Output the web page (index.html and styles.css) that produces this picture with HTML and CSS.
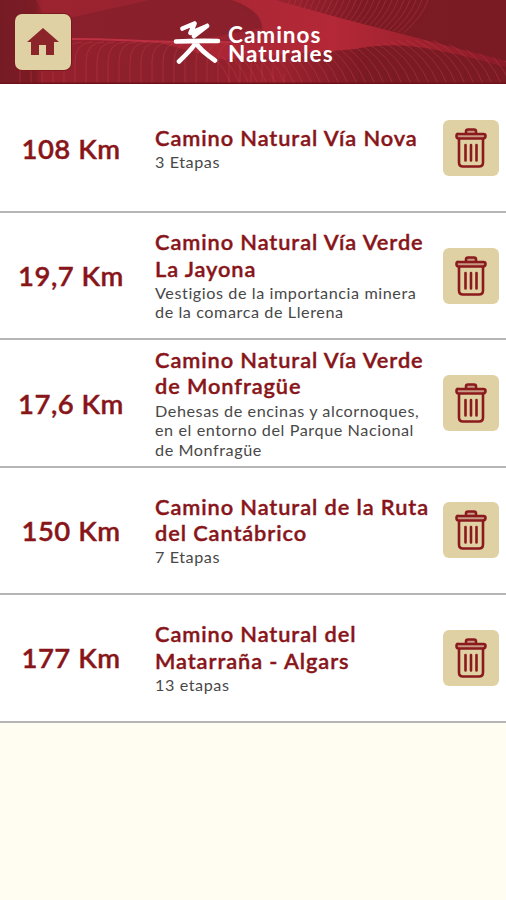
FILE: index.html
```
<!DOCTYPE html>
<html lang="es">
<head>
<meta charset="utf-8">
<title>Caminos Naturales</title>
<link rel="stylesheet" href="styles.css">
</head>
<body>
<svg class="defs" aria-hidden="true">
  <symbol id="trash" viewBox="0 0 34 42">
    <path class="lid" d="M12 6.500V4.500Q12 2.500 14 2.500H20Q22 2.500 22 4.500V6.500M4.500 7H29.500Q31.500 7 31.500 9T29.500 11.500H4.500Q2.500 11.500 2.500 9T4.500 7Z"/>
    <path d="M5 12V35.500Q5 39.500 9 39.500H25Q29 39.500 29 35.500V12M11.500 18V33.500M17 18V33.500M22.500 18V33.500"/>
  </symbol>
</svg>
<header class="header">
  <svg class="art" viewBox="0 0 506 84" preserveAspectRatio="none" aria-hidden="true">
    <defs>
      <linearGradient id="base"><stop offset="0" stop-color="#761b24"/><stop offset=".07" stop-color="#7c1c25"/><stop offset=".085" stop-color="#96222e"/><stop offset=".35" stop-color="#8a212c"/><stop offset=".55" stop-color="#9c2431"/><stop offset=".72" stop-color="#7b1b24"/><stop offset="1" stop-color="#7a1b24"/></linearGradient>
      <linearGradient id="glow"><stop offset="0" stop-color="#a52634"/><stop offset=".5" stop-color="#b42837"/><stop offset="1" stop-color="#8b1c28"/></linearGradient>
      <clipPath id="low-left"><path d="M0 38H72C120 38 170 44 240 44L300 84H0Z"/></clipPath>
      <clipPath id="top-right"><path d="M275 0H440L404 34L340 18Z"/></clipPath>
      <clipPath id="low-right"><path d="M215 84V55C270 48 320 50 340 50C385 46 405 34 420 36L506 61V84Z"/></clipPath>
    </defs>
    <path fill="url(#base)" d="M0 0H506V84H0Z"/>
    <path fill="#a32533" opacity=".55" d="M36 0H235L268 38L170 43L72 38L45 16Z"/>
    <path fill="#7e1e28" opacity=".6" d="M150 0H232Q262 12 262 28L180 43L72 38L60 20Z"/>
    <path fill="url(#glow)" d="M232 0H275L340 18L506 61V67C435 48 400 40 355 49C300 54 260 55 225 60L160 43H240Q266 40 262 25Q259 9 232 0Z"/>
    <path fill="none" stroke="#bd3042" stroke-width="2" d="M72 39C110 38 160 44 240 42"/>
    <g clip-path="url(#low-left)" class="lines" id="lines-left"></g>
    <g clip-path="url(#top-right)" class="lines" id="lines-top"></g>
    <g clip-path="url(#low-right)" class="lines" id="lines-right"></g>
    <path fill="#701019" d="M0 82.500H506V84H0Z"/>
  </svg>
  <a class="button home" href="#" aria-label="Inicio">
    <svg viewBox="0 0 32 28"><path d="M16 0 32 14H27V27H19V17H12V27H4V14H0Z"/></svg>
  </a>
  <div class="brand">
    <svg class="mark" viewBox="0 0 48 44"><path d="M9.500 8.500 21.500 3.500 17.500 13 34 6M34 6 21 16M3 21.500Q24 20.500 45 21M22.500 23 Q20 28 6 41.500M23 23 Q27 30 42 40.500"/></svg>
    <div class="wordmark"><div>Caminos</div><div>Naturales</div></div>
  </div>
</header>
<main class="list">
  <article class="row">
    <div class="distance">108 Km</div>
    <div class="info"><h2>Camino Natural Vía Nova</h2><p>3 Etapas</p></div>
    <button class="button" aria-label="Eliminar"><svg><use href="#trash"/></svg></button>
  </article>
  <article class="row">
    <div class="distance">19,7 Km</div>
    <div class="info"><h2>Camino Natural Vía Verde<br>La Jayona</h2><p>Vestigios de la importancia minera<br>de la comarca de Llerena</p></div>
    <button class="button" aria-label="Eliminar"><svg><use href="#trash"/></svg></button>
  </article>
  <article class="row">
    <div class="distance">17,6 Km</div>
    <div class="info"><h2>Camino Natural Vía Verde<br>de Monfragüe</h2><p>Dehesas de encinas y alcornoques,<br>en el entorno del Parque Nacional<br>de Monfragüe</p></div>
    <button class="button" aria-label="Eliminar"><svg><use href="#trash"/></svg></button>
  </article>
  <article class="row">
    <div class="distance">150 Km</div>
    <div class="info"><h2>Camino Natural de la Ruta<br>del Cantábrico</h2><p>7 Etapas</p></div>
    <button class="button" aria-label="Eliminar"><svg><use href="#trash"/></svg></button>
  </article>
  <article class="row">
    <div class="distance">177 Km</div>
    <div class="info"><h2>Camino Natural del<br>Matarraña - Algars</h2><p>13 etapas</p></div>
    <button class="button" aria-label="Eliminar"><svg><use href="#trash"/></svg></button>
  </article>
</main>
<script src="script.js"></script>
</body>
</html>
```
FILE: styles.css
```
* { box-sizing: border-box; }
body { margin: 0; min-height: 100vh; background: #fffcf2; font-family: Lato, "Open Sans", sans-serif; }
.defs { position: absolute; width: 0; height: 0; }
.header { position: relative; height: 84px; display: flex; align-items: center; padding-left: 15px; background: #84202a; overflow: hidden; }
.art { position: absolute; inset: 0; width: 100%; height: 100%; }
.lines { fill: none; stroke: #c3394a; stroke-width: 1; opacity: .45; }
.button { display: flex; align-items: center; justify-content: center; width: 56px; height: 56px; padding: 0; border: 0; border-radius: 6px; background: #e0d1a5; }
.home { position: relative; border-radius: 7px; box-shadow: 0 0 0 1px #7c1820; }
.home svg { width: 32px; height: 28px; fill: #8b252a; }
.brand { position: relative; display: flex; align-items: center; margin-left: 102px; gap: 7px; }
.mark { width: 48px; height: 44px; fill: none; stroke: #fff; stroke-width: 4.600; stroke-linecap: round; stroke-linejoin: round; }
.wordmark { padding-top: 4px; color: #fff; font-size: 22.500px; font-weight: 700; line-height: 19px; letter-spacing: 1px; white-space: nowrap; }
.list { padding-top: 1.600px; background: #fff; }
.row { display: grid; grid-template-columns: 155px 288px 56px; align-items: center; height: 127.400px; border-bottom: 2px solid #b5b5b5; background: #fff; }
.distance { width: 142px; text-align: center; color: #881519; font-size: 27.500px; font-weight: 600; letter-spacing: .5px; -webkit-text-stroke: .4px #881519; white-space: nowrap; }
.info { white-space: nowrap; }
.info h2 { margin: 0; color: #881519; font-size: 21.800px; font-weight: 600; line-height: 26.200px; letter-spacing: .9px; -webkit-text-stroke: .4px #881519; }
.info p { margin: 0; padding-top: 1px; color: #484848; font-size: 16.200px; font-weight: 400; line-height: 19.500px; letter-spacing: .57px; }
.row .button svg { width: 34px; height: 42px; fill: none; stroke: #8b1a1c; stroke-width: 2.600; stroke-linecap: round; stroke-linejoin: round; }
.lid { fill: #c99a83; }
```
FILE: script.js
```
// Curved contour lines woven into the header background.
function addLines(id, count, curve) {
  const group = document.getElementById(id);
  for (let i = 0; i < count; i++) {
    const path = document.createElementNS("http://www.w3.org/2000/svg", "path");
    path.setAttribute("d", curve(i));
    group.appendChild(path);
  }
}
addLines("lines-left", 26, i => `M${20 + i * 11} 84V62Q${20 + i * 11} 42 ${38 + i * 11} 42`);
addLines("lines-top", 24, i => `M${290 + i * 6} 0Q${284 + i * 6} 18 ${262 + i * 6} 36`);
addLines("lines-right", 34, i => `M${190 + i * 9} 40Q${220 + i * 9} 54 ${232 + i * 9} 86`);
```
